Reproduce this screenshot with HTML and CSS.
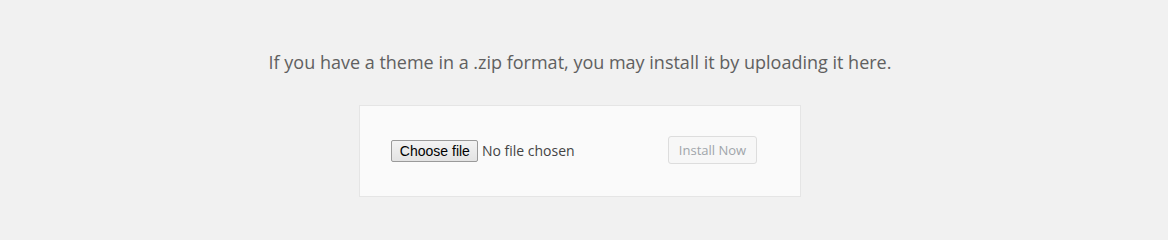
FILE: index.html
```html
<!DOCTYPE html>
<html lang="en">
<head>
<meta charset="utf-8">
<title>Upload Theme</title>
<link rel="stylesheet" href="styles.css">
</head>
<body>
<div class="upload-theme">
  <p class="install-help">If you have a theme in a .zip format, you may install it by uploading it here.</p>
  <form class="wp-upload-form">
    <label class="file-field">
      <input type="file" class="file-input" name="themezip">
      <span class="file-button">Choose file</span>
      <span class="file-name">No file chosen</span>
    </label>
    <button type="button" class="button" disabled>Install Now</button>
  </form>
</div>
</body>
</html>
```

FILE: styles.css
```css
html, body {
  margin: 0;
  padding: 0;
  background: #f1f1f1;
}
body {
  font-family: "Open Sans", sans-serif;
  color: #444;
  font-size: 13px;
}
.upload-theme {
  padding: 20px 8px 0 0;
  text-align: center;
}
.install-help {
  margin: 0;
  padding: 30px 0;
  font-size: 18px;
  line-height: 24px;
  color: #606060;
}
.wp-upload-form {
  display: inline-flex;
  align-items: center;
  margin: 1px auto 0;
  padding: 30px 43px 32px 31px;
  background: #fafafa;
  border: 1px solid #e5e5e5;
}
.file-field {
  position: relative;
  display: flex;
  align-items: center;
  width: 277px;
  text-align: left;
}
.file-input {
  position: absolute;
  width: 1px;
  height: 1px;
  opacity: 0;
  overflow: hidden;
  pointer-events: none;
}
.file-button {
  box-sizing: border-box;
  height: 22px;
  padding: 0 7px 0 8px;
  margin-top: 1px;
  font-family: "Liberation Sans", Arial, sans-serif;
  font-size: 14px;
  line-height: 20px;
  color: #000;
  background: linear-gradient(#f3f3f3, #e3e3e3);
  border: 1px solid #9a9a9a;
  border-radius: 2px;
}
.file-name {
  margin-left: 4px;
  font-family: "Open Sans", sans-serif;
  font-size: 14px;
  color: #444;
}
.button {
  height: 28px;
  padding: 0 10px 1px;
  font-family: "Open Sans", sans-serif;
  font-size: 13px;
  line-height: 26px;
  border-radius: 3px;
  border: 1px solid #ddd;
  background: #f7f7f7;
  color: #a0a5aa;
}
```
